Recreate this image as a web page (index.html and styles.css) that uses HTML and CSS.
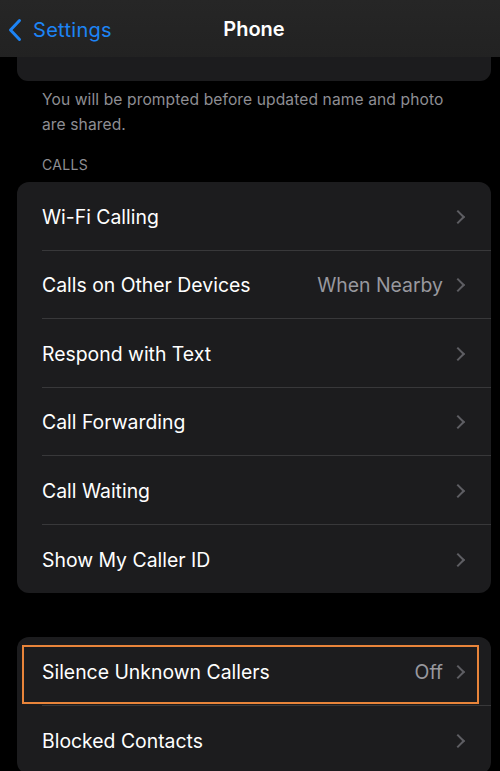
FILE: index.html
```html
<!DOCTYPE html>
<html>
<head>
<meta charset="utf-8">
<link rel="stylesheet" href="styles.css">
</head>
<body>
<div class="screen">
  <header class="nav">
    <div class="back">
      <svg class="back-chev" width="14" height="24" viewBox="0 0 14 24"><path d="M11.5 2.5 L2.5 12 L11.5 21.5" fill="none" stroke="#1d84f5" stroke-width="3" stroke-linecap="round" stroke-linejoin="round"/></svg>
      <span class="back-label">Settings</span>
    </div>
    <div class="title">Phone</div>
  </header>

  <div class="peek-card"></div>
  <p class="footer">You will be prompted before updated name and photo are shared.</p>

  <div class="section-header">CALLS</div>
  <div class="card">
    <div class="row"><span class="label">Wi-Fi Calling</span><span class="chev"></span></div>
    <div class="row"><span class="label">Calls on Other Devices</span><span class="value">When Nearby</span><span class="chev"></span></div>
    <div class="row"><span class="label">Respond with Text</span><span class="chev"></span></div>
    <div class="row"><span class="label">Call Forwarding</span><span class="chev"></span></div>
    <div class="row"><span class="label">Call Waiting</span><span class="chev"></span></div>
    <div class="row"><span class="label">Show My Caller ID</span><span class="chev"></span></div>
  </div>

  <div class="card card-second">
    <div class="row highlighted"><span class="label">Silence Unknown Callers</span><span class="value">Off</span><span class="chev"></span><span class="highlight-box"></span></div>
    <div class="row"><span class="label">Blocked Contacts</span><span class="chev"></span></div>
  </div>
</div>
</body>
</html>
```

FILE: styles.css
```css
* { box-sizing: border-box; }
html, body {
  margin: 0;
  padding: 0;
  background: #000;
}
body {
  font-family: "Inter", "Liberation Sans", sans-serif;
  color: #fff;
  width: 500px;
  height: 771px;
  overflow: hidden;
}
.screen {
  display: flex;
  flex-direction: column;
}
.nav {
  height: 57px;
  background: linear-gradient(180deg, #262626 0%, #222222 100%);
  display: flex;
  align-items: center;
  position: relative;
  z-index: 2;
}
.back {
  display: flex;
  align-items: center;
  gap: 11px;
  padding-left: 8px;
  padding-top: 2px;
}
.back-label {
  color: #1d84f5;
  font-size: 20px;
  letter-spacing: 0.3px;
}
.title {
  position: absolute;
  left: 0;
  right: 0;
  top: 17px;
  text-align: center;
  font-size: 20px;
  font-weight: 600;
  padding-left: 8px;
  pointer-events: none;
}
.peek-card {
  margin: 0 9px 0 17px;
  height: 24px;
  background: #1c1c1e;
  border-radius: 0 0 11px 11px;
}
.footer {
  margin: 0;
  padding: 6px 30px 0 42px;
  color: #8e8e93;
  font-size: 15.6px;
  line-height: 25px;
  letter-spacing: 0.1px;
}
.section-header {
  padding: 20px 0 0 42px;
  color: #8e8e93;
  font-size: 14px;
  line-height: 16px;
  letter-spacing: 0.3px;
  height: 45px;
}
.card {
  margin: 0 9px 0 17px;
  background: #1c1c1e;
  border-radius: 12px;
  overflow: hidden;
}
.card-second {
  margin-top: 44px;
}
.row {
  height: 68.5px;
  margin-left: 25px;
  padding-right: 25px;
  padding-top: 2px;
  display: flex;
  align-items: center;
  border-bottom: 1px solid #38383a;
  position: relative;
}
.row:last-child {
  border-bottom: none;
}
.label {
  flex: 1;
  font-size: 19.4px;
  color: #fff;
}
.value {
  font-size: 19.4px;
  color: #98989e;
  margin-right: 10px;
}
.chev {
  width: 10px;
  height: 10px;
  border-top: 2.5px solid #5e5e63;
  border-right: 2.5px solid #5e5e63;
  transform: rotate(45deg);
  margin-right: 3px;
}
.highlight-box {
  position: absolute;
  left: -20px;
  right: 12px;
  top: 8px;
  bottom: 1px;
  border: 2px solid #e8843a;
  pointer-events: none;
}
```
